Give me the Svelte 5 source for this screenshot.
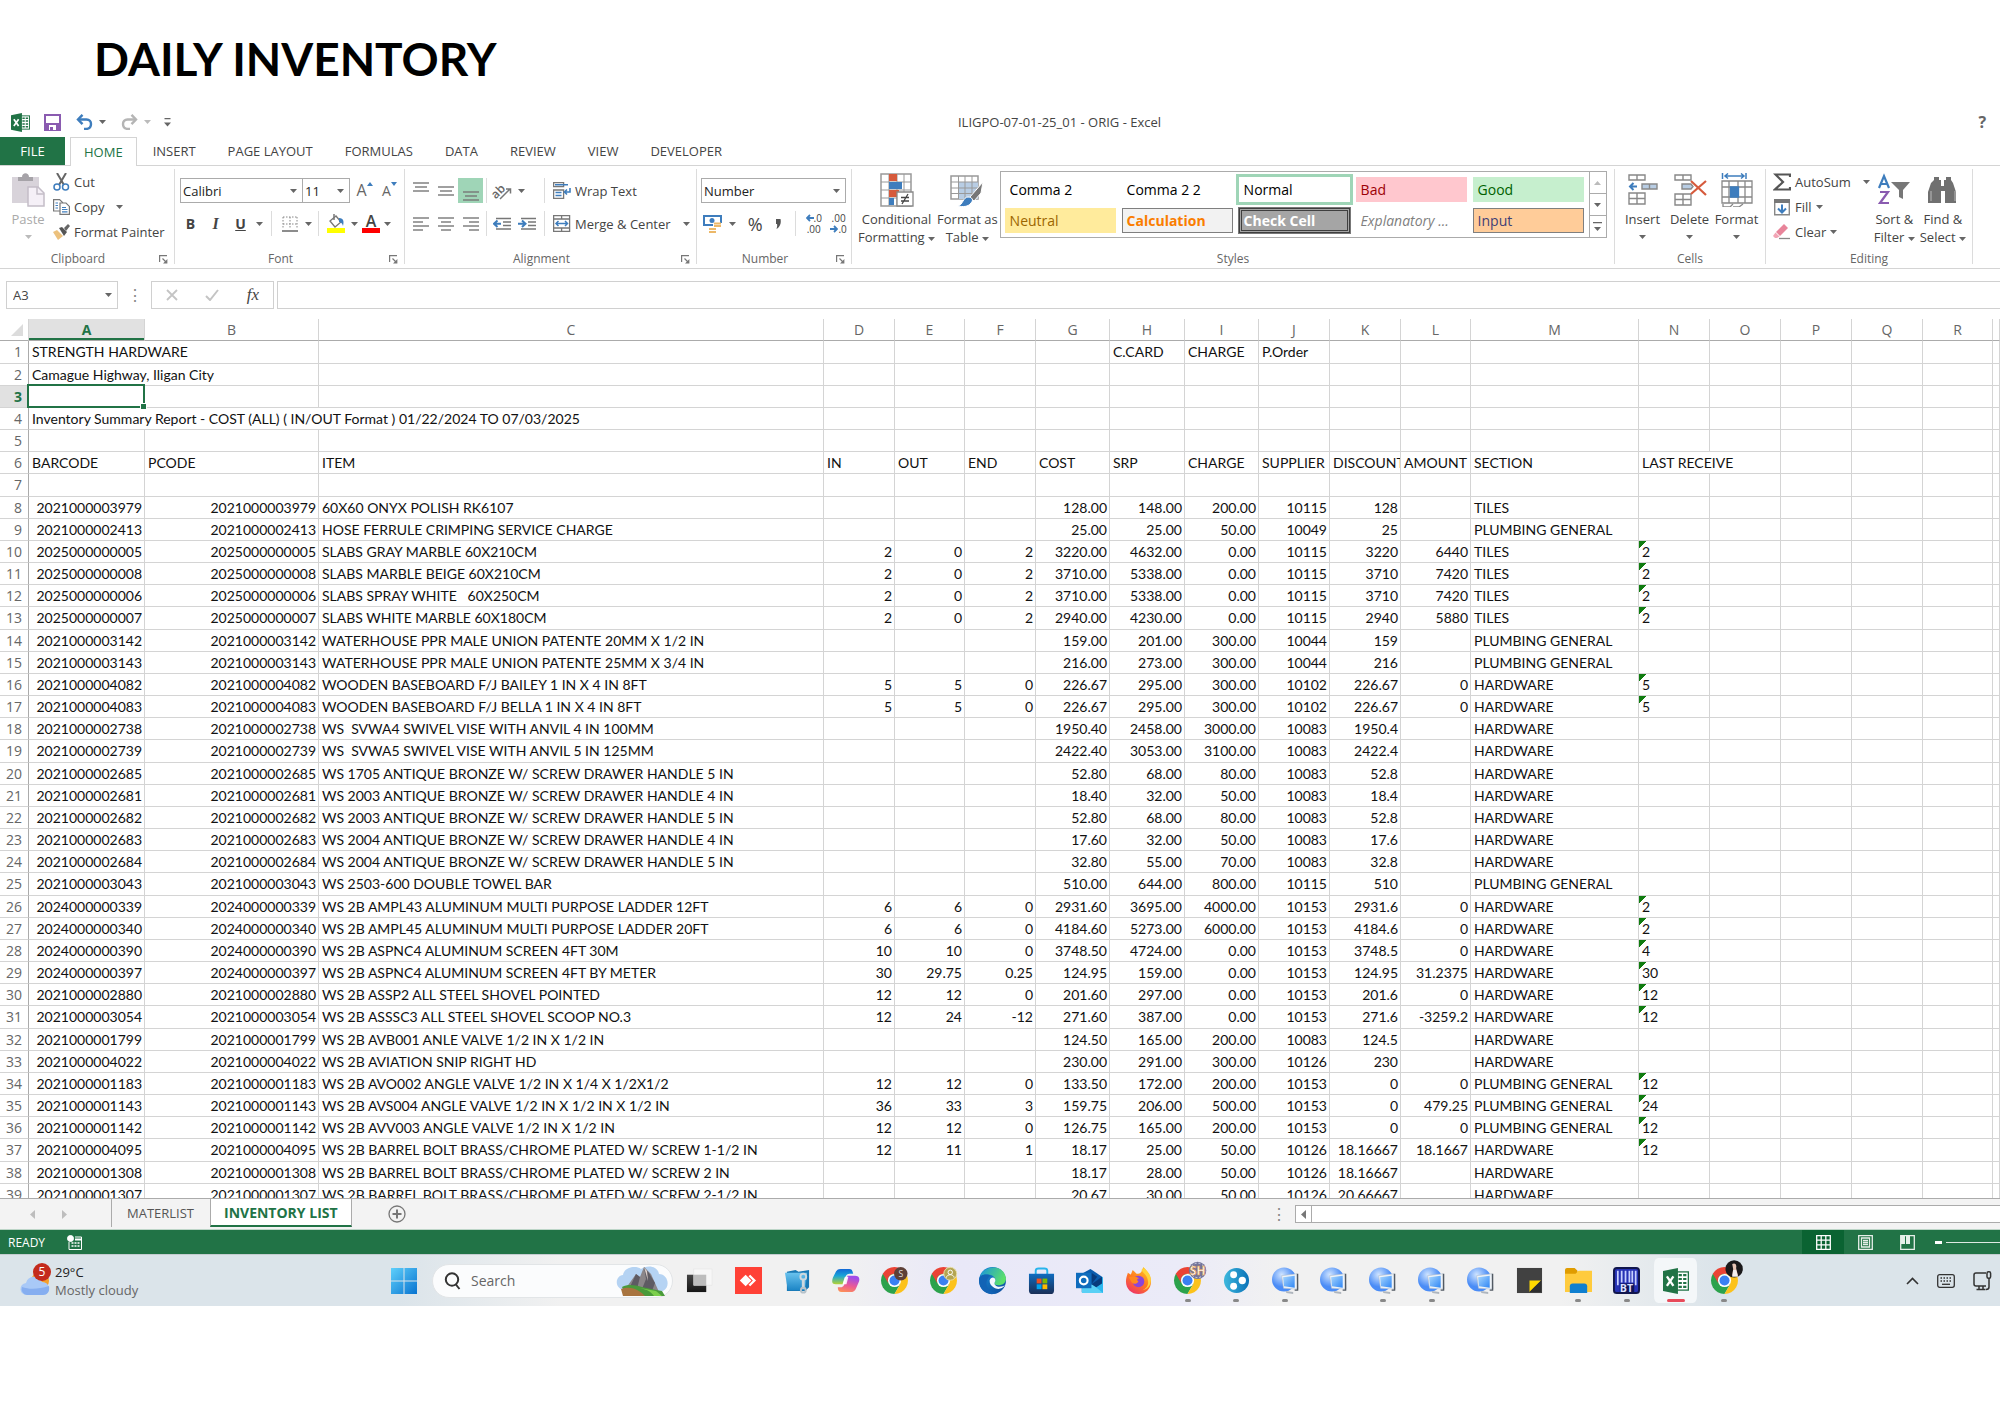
<script>
  const tabs = ['INSERT', 'PAGE LAYOUT', 'FORMULAS', 'DATA', 'REVIEW', 'VIEW', 'DEVELOPER'];

  const columns = [
    ['A', 116], ['B', 174], ['C', 505], ['D', 71], ['E', 70], ['F', 71],
    ['G', 74], ['H', 75], ['I', 74], ['J', 71], ['K', 71], ['L', 70],
    ['M', 168], ['N', 71], ['O', 71], ['P', 71], ['Q', 71], ['R', 70], ['', 0],
  ];

  const cellStyles = [
    ['Comma 2', ''], ['Comma 2 2', ''], ['Normal', 'normal'], ['Bad', 'bad'], ['Good', 'good'],
    ['Neutral', 'neutral'], ['Calculation', 'calculation'], ['Check Cell', 'check'],
    ['Explanatory ...', 'explanatory'], ['Input', 'input'],
  ];

  // cells in the first rows: text, and the number of columns it runs over
  const head = [
    [['STRENGTH HARDWARE', 2], '', '', '', '', '', 'C.CARD', 'CHARGE', 'P.Order', '', '', '', '', '', '', '', '', ''],
    [['Camague Highway, Iligan City', 2], ...Array(17).fill('')],
    Array(19).fill(''),
    [['Inventory Summary Report - COST (ALL) ( IN/OUT Format ) 01/22/2024 TO 07/03/2025', 3], ...Array(16).fill('')],
    Array(19).fill(''),
    ['BARCODE', 'PCODE', 'ITEM', 'IN', 'OUT', 'END', 'COST', 'SRP', 'CHARGE', 'SUPPLIER', 'DISCOUNT', 'AMOUNT', 'SECTION', ['LAST RECEIVE', 2], '', '', '', ''],
    Array(19).fill(''),
  ];

  // barcode | item | in | out | end | cost | srp | charge | supplier | discount | amount | section | last receive
  const items = `2021000003979|60X60 ONYX POLISH RK6107||||128.00|148.00|200.00|10115|128||TILES|
2021000002413|HOSE FERRULE CRIMPING SERVICE CHARGE||||25.00|25.00|50.00|10049|25||PLUMBING GENERAL|
2025000000005|SLABS GRAY MARBLE 60X210CM|2|0|2|3220.00|4632.00|0.00|10115|3220|6440|TILES|2
2025000000008|SLABS MARBLE BEIGE 60X210CM|2|0|2|3710.00|5338.00|0.00|10115|3710|7420|TILES|2
2025000000006|SLABS SPRAY WHITE   60X250CM|2|0|2|3710.00|5338.00|0.00|10115|3710|7420|TILES|2
2025000000007|SLABS WHITE MARBLE 60X180CM|2|0|2|2940.00|4230.00|0.00|10115|2940|5880|TILES|2
2021000003142|WATERHOUSE PPR MALE UNION PATENTE 20MM X 1/2 IN||||159.00|201.00|300.00|10044|159||PLUMBING GENERAL|
2021000003143|WATERHOUSE PPR MALE UNION PATENTE 25MM X 3/4 IN||||216.00|273.00|300.00|10044|216||PLUMBING GENERAL|
2021000004082|WOODEN BASEBOARD F/J BAILEY 1 IN X 4 IN 8FT|5|5|0|226.67|295.00|300.00|10102|226.67|0|HARDWARE|5
2021000004083|WOODEN BASEBOARD F/J BELLA 1 IN X 4 IN 8FT|5|5|0|226.67|295.00|300.00|10102|226.67|0|HARDWARE|5
2021000002738|WS  SVWA4 SWIVEL VISE WITH ANVIL 4 IN 100MM||||1950.40|2458.00|3000.00|10083|1950.4||HARDWARE|
2021000002739|WS  SVWA5 SWIVEL VISE WITH ANVIL 5 IN 125MM||||2422.40|3053.00|3100.00|10083|2422.4||HARDWARE|
2021000002685|WS 1705 ANTIQUE BRONZE W/ SCREW DRAWER HANDLE 5 IN||||52.80|68.00|80.00|10083|52.8||HARDWARE|
2021000002681|WS 2003 ANTIQUE BRONZE W/ SCREW DRAWER HANDLE 4 IN||||18.40|32.00|50.00|10083|18.4||HARDWARE|
2021000002682|WS 2003 ANTIQUE BRONZE W/ SCREW DRAWER HANDLE 5 IN||||52.80|68.00|80.00|10083|52.8||HARDWARE|
2021000002683|WS 2004 ANTIQUE BRONZE W/ SCREW DRAWER HANDLE 4 IN||||17.60|32.00|50.00|10083|17.6||HARDWARE|
2021000002684|WS 2004 ANTIQUE BRONZE W/ SCREW DRAWER HANDLE 5 IN||||32.80|55.00|70.00|10083|32.8||HARDWARE|
2021000003043|WS 2503-600 DOUBLE TOWEL BAR||||510.00|644.00|800.00|10115|510||PLUMBING GENERAL|
2024000000339|WS 2B AMPL43 ALUMINUM MULTI PURPOSE LADDER 12FT|6|6|0|2931.60|3695.00|4000.00|10153|2931.6|0|HARDWARE|2
2024000000340|WS 2B AMPL45 ALUMINUM MULTI PURPOSE LADDER 20FT|6|6|0|4184.60|5273.00|6000.00|10153|4184.6|0|HARDWARE|2
2024000000390|WS 2B ASPNC4 ALUMINUM SCREEN 4FT 30M|10|10|0|3748.50|4724.00|0.00|10153|3748.5|0|HARDWARE|4
2024000000397|WS 2B ASPNC4 ALUMINUM SCREEN 4FT BY METER|30|29.75|0.25|124.95|159.00|0.00|10153|124.95|31.2375|HARDWARE|30
2021000002880|WS 2B ASSP2 ALL STEEL SHOVEL POINTED|12|12|0|201.60|297.00|0.00|10153|201.6|0|HARDWARE|12
2021000003054|WS 2B ASSSC3 ALL STEEL SHOVEL SCOOP NO.3|12|24|-12|271.60|387.00|0.00|10153|271.6|-3259.2|HARDWARE|12
2021000001799|WS 2B AVB001 ANLE VALVE 1/2 IN X 1/2 IN||||124.50|165.00|200.00|10083|124.5||HARDWARE|
2021000004022|WS 2B AVIATION SNIP RIGHT HD||||230.00|291.00|300.00|10126|230||HARDWARE|
2021000001183|WS 2B AVO002 ANGLE VALVE 1/2 IN X 1/4 X 1/2X1/2|12|12|0|133.50|172.00|200.00|10153|0|0|PLUMBING GENERAL|12
2021000001143|WS 2B AVS004 ANGLE VALVE 1/2 IN X 1/2 IN X 1/2 IN|36|33|3|159.75|206.00|500.00|10153|0|479.25|PLUMBING GENERAL|24
2021000001142|WS 2B AVV003 ANGLE VALVE 1/2 IN X 1/2 IN|12|12|0|126.75|165.00|200.00|10153|0|0|PLUMBING GENERAL|12
2021000004095|WS 2B BARREL BOLT BRASS/CHROME PLATED W/ SCREW 1-1/2 IN|12|11|1|18.17|25.00|50.00|10126|18.16667|18.1667|HARDWARE|12
2021000001308|WS 2B BARREL BOLT BRASS/CHROME PLATED W/ SCREW 2 IN||||18.17|28.00|50.00|10126|18.16667||HARDWARE|
2021000001307|WS 2B BARREL BOLT BRASS/CHROME PLATED W/ SCREW 2-1/2 IN||||20.67|30.00|50.00|10126|20.66667||HARDWARE|`
    .split('\n')
    .map((line) => {
      const [code, ...rest] = line.split('|');
      return [code, code, ...rest, '', '', '', '', ''];
    });

  const isText = (i) => i === 2 || i === 12 || i === 13;

  const apps = [
    ['desktops'], ['anydesk'], ['vault'], ['copilot'], ['chrome', 's'], ['chrome', 'gold'], ['edge'],
    ['store'], ['outlook'], ['firefox'], ['chrome', 'sh', 1], ['dots', '', 1], ['remote', '', 1],
    ['remote'], ['remote', '', 1], ['remote', '', 1], ['remote'], ['notes'], ['folder', '', 1],
    ['bartender', '', 1], ['excel', '', 2], ['chrome', 'photo', 1],
  ];

  let search = '';
  let formula = '';
</script>

{#snippet caret(light = false)}
  <svg class="caret" class:light width="7" height="4" viewBox="0 0 7 4"><path d="M0 0h7L3.5 4z" /></svg>
{/snippet}

{#snippet launcher(name)}
  <button class="launcher" aria-label="{name} settings">
    <svg width="9" height="9" viewBox="0 0 9 9" fill="none" stroke="#777" stroke-width="1.2"><path d="M.6 7V.6H8M3.5 3.5 7 7" /><path d="M8.4 4v4.4H4z" fill="#777" stroke="none" /></svg>
  </button>
{/snippet}

{#snippet lines(list, y)}
  <svg width="18" height="24" viewBox="0 0 18 24" stroke="#777" stroke-width="1.4">
    {#each list as [a, b], i}
      <path d="M{a} {y + i * 4}H{b}" />
    {/each}
  </svg>
{/snippet}

{#snippet indent(right)}
  <svg width="19" height="16" viewBox="0 0 19 16" fill="none" stroke="#777" stroke-width="1.4">
    <path d="M3 2.500h15M10 6h8M10 9.500h8M3 13h15" />
    {#if right}
      <path d="M0 7.700h6M4 4.500l3.500 3.200L4 11" stroke="#3e7dbd" stroke-width="2" />
    {:else}
      <path d="M2 7.700h6M4.500 4.500 1 7.700 4.500 11" stroke="#3e7dbd" stroke-width="2" />
    {/if}
  </svg>
{/snippet}

{#snippet excelLogo(size)}
  <svg width={size} height={size} viewBox="0 0 20 20">
    <rect x="9" y="3" width="10.500" height="14" fill="#fff" stroke="#217346" />
    <path d="M12 5.500h2.500M15.500 5.500H18M12 8.500h2.500M15.500 8.500H18M12 11.500h2.500M15.500 11.500H18M12 14.500h2.500M15.500 14.500H18" stroke="#217346" stroke-width="1.600" />
    <path d="M0 2.300 11.500 0v20L0 17.700z" fill="#217346" />
    <path d="m3 6.500 5 7.200M8 6.500l-5 7.200" stroke="#fff" stroke-width="1.800" />
  </svg>
{/snippet}

{#snippet appIcon(kind, badge)}
  {#if kind === 'excel'}
    {@render excelLogo(26)}
  {:else}
    <svg width="27" height="27" viewBox="0 0 28 28" overflow="visible">
      {#if kind === 'desktops'}
        <path d="M1 8h20v18H1z" fill="url(#dark)" />
        <path d="M8 2h19v17H8z" fill="#f7f7f7" stroke="#e4e4e4" stroke-width=".6" />
        <path d="M8 8h13v11H8z" fill="#bdbdbd" />
      {:else if kind === 'anydesk'}
        <path d="M0 0h28v28H0z" fill="#ff4136" />
        <path d="m5 14 6-6 6 6-6 6z" fill="#fff" />
        <path d="m14 9.500 1.800-1.500 6 6-6 6-1.800-1.500 4.500-4.500z" fill="#fff" />
      {:else if kind === 'vault'}
        <path d="M3 5 12 3l3 2 11-2v18l-4 4H3z" fill="#1978b4" />
        <path d="M1 6h23l-2 18H4z" fill="url(#sky)" />
        <circle cx="20" cy="10" r="3" fill="none" stroke="#cdd8de" stroke-width="2" />
        <path d="M20 13v10" stroke="#cdd8de" stroke-width="3" />
        <circle cx="20" cy="24" r="2.500" fill="none" stroke="#b7c2c9" stroke-width="2" />
      {:else if kind === 'copilot'}
        <path d="M9 2h9c3 0 3 2 4 5h-4c-3 0-4 3-5 6l-2 5H4c-5 0-4-4-3-7l3-6c1-2 2-3 5-3z" fill="url(#cop1)" />
        <path d="M19 26h-9c-3 0-4-2-4-5h3c3 0 4-3 5-6l2-6h8c4 0 5 3 4 6l-3 7c-1 3-3 4-6 4z" fill="url(#cop2)" />
        <path d="m13 11-2 7h4l2-8h-3z" fill="#fff" opacity=".9" />
      {:else if kind === 'chrome'}
        <path d="M1.900 7A14 14 0 0 0 14 28l6-10.500L14 14z" fill="#2ba24c" />
        <path d="M14 28A14 14 0 0 0 26.100 7H14l6 10.500z" fill="#fcc21b" />
        <path d="M1.900 7 8 17.500 14 14V7z" fill="#2ba24c" />
        <path d="M1.900 7A14 14 0 0 1 26.100 7H14a7 7 0 0 0-6 10.500z" fill="#ea4335" />
        <circle cx="14" cy="14" r="6.800" fill="#fff" />
        <circle cx="14" cy="14" r="5.200" fill="#3a80f2" />
        {#if badge === 's'}
          <circle cx="20.500" cy="7" r="7" fill="#5d4037" />
          <text x="20.500" y="10" text-anchor="middle" font-size="9" fill="#ddd">S</text>
        {:else if badge === 'gold'}
          <circle cx="21" cy="7" r="6.700" fill="#b4a552" stroke="#e8dfa8" />
          <circle cx="21" cy="5.500" r="2.300" fill="none" stroke="#fff" />
          <path d="M17 11c.5-4 7.500-4 8 0" fill="none" stroke="#fff" />
        {:else if badge === 'sh'}
          <circle cx="24.500" cy="3.500" r="9" fill="#73759b" />
          <circle cx="24.500" cy="3.500" r="7.500" fill="none" stroke="#dadbea" stroke-dasharray="2 2" />
          <text x="24.500" y="8" text-anchor="middle" font-size="12" font-weight="700" fill="#fff" stroke="#e09030" stroke-width=".6">SH</text>
        {:else}
          <circle cx="24" cy="2" r="9" fill="#1b191a" />
          <path d="M22-3c3-2 5 1 4 4l2 8h-6l1-7z" fill="#e9c6b5" />
          <path d="M23 3h3l2 7h-6z" fill="#f2efee" />
        {/if}
      {:else if kind === 'edge'}
        <circle cx="14" cy="14" r="14" fill="url(#edge1)" />
        <path d="M0 14C0 8 7 6 12 9c-3 2-5 6-4 10 1 5 6 8 11 8C9 31 0 24 0 14z" fill="#1263b5" />
        <path d="M2 7C8-2 26-3 28 12c0 5-4 7-8 7-3 0-5-1-4-3 2-2 1-7-5-8-4-1-7 0-9 1z" fill="url(#edge2)" />
        <path d="M11 14c1-4 6-4 6 0 0 1-2 3 0 5 3 3 8 1 10 0-3 4-8 5-12 2-3-2-4-4-4-7z" fill="#f4f6ff" />
      {:else if kind === 'store'}
        <path d="M8 8V4c0-2 1-2.500 3-2.500h6c2 0 3 .5 3 2.500v4" fill="none" stroke="#28b4ec" stroke-width="2" />
        <path d="M1 7h26v17c0 3-1 4-4 4H5c-3 0-4-1-4-4z" fill="url(#store)" />
        <path d="M9 12h5v5H9z" fill="#f25022" /><path d="M15 12h5v5h-5z" fill="#7fba00" />
        <path d="M9 18h5v5H9z" fill="#00a4ef" /><path d="M15 18h5v5h-5z" fill="#ffb900" />
      {:else if kind === 'outlook'}
        <path d="m6 7 9-5 12 8v16H6z" fill="#0a5cad" />
        <path d="M17 18 28 10v17H8z" fill="#2bb7ee" /><path d="m17 18 11 9H6v-5z" fill="#59d0f5" />
        <path d="m16 6 6 4-6 8 11-8v7l-6 4-5-3z" fill="#083b7c" />
        <path d="M0 6h16v16H0z" fill="#0f6cbd" />
        <circle cx="8" cy="14" r="4" fill="none" stroke="#fff" stroke-width="2.200" />
      {:else if kind === 'firefox'}
        <path d="M3 6c1 1 2 1 3 2l2-5 4 4c2 0 4 0 5-2l2-5c3 3 8 8 8 15 0 8-6 13-13 13S1 23 1 15c0-3 1-6 2-9z" fill="url(#fire)" />
        <path d="M17 3c2 4 7 6 7 13 0 4-3 7-6 8 8-1 11-10 7-17l-5-6z" fill="#ffd43b" />
        <circle cx="14" cy="15" r="6" fill="#8b45d8" />
        <path d="M4 11c3-2 8-1 11 1-3 0-3 2-1 3-2 3-5 3-7 1z" fill="#ff8a1e" />
      {:else if kind === 'dots'}
        <circle cx="14" cy="14" r="13" fill="url(#dots)" />
        <circle cx="11" cy="8" r="3.600" fill="#fff" /><circle cx="20" cy="14" r="3.800" fill="#fff" /><circle cx="11" cy="20" r="3.600" fill="#fff" />
      {:else if kind === 'remote'}
        <circle cx="12.500" cy="13" r="12.500" fill="url(#globe)" />
        <path d="m10 9 16-2 1 16-15-1z" fill="#eef3f8" stroke="#b3bfcc" stroke-width=".6" />
        <path d="m11.500 10.500 12-1.500v12.500L12.500 20z" fill="url(#sky2)" />
        <path d="M26.500 7v17h-3" fill="none" stroke="#525a63" stroke-width="1.500" />
        <path d="m14 25 8 1v2l-7-1z" fill="#aeb5bd" />
      {:else if kind === 'notes'}
        <path d="M1 1h26v26H1z" fill="#414141" />
        <path d="M14 14h12L14 26z" fill="#ffd900" /><path d="M26 14v12H14z" fill="#2e2e2e" />
      {:else if kind === 'folder'}
        <path d="M0 3c0-1 1-2 2-2h8l3 3v5H0z" fill="#e09c00" />
        <path d="M0 7h11l3-3h14v22H0z" fill="#ffcb3d" />
        <path d="M5 20c0-2 1-3 3-3h12c2 0 3 1 3 3v7H5z" fill="#0f7fd0" />
      {:else if kind === 'bartender'}
        <rect x="1" y="1" width="26" height="26" rx="3" fill="#2632b5" stroke="#11164d" stroke-width="2" />
        <path d="M5 4v15M9 4v12M13 4v12M17 4v12M20 4v12M23.500 4v15" stroke="#c8d1ff" stroke-width="1.800" />
        <path d="M7 17h15v9H7z" fill="#0e145a" />
        <text x="14" y="25.500" text-anchor="middle" font-size="11" font-weight="700" fill="#dbe0ff">BT</text>
      {/if}
    </svg>
  {/if}
{/snippet}

<svg class="defs" width="0" height="0" aria-hidden="true">
  <defs>
    <linearGradient id="dark" x2="0" y2="1"><stop stop-color="#444" /><stop offset="1" stop-color="#161616" /></linearGradient>
    <linearGradient id="sky" x2="0" y2="1"><stop stop-color="#69c2ee" /><stop offset="1" stop-color="#1d86c6" /></linearGradient>
    <linearGradient id="sky2" x2="1" y2="1"><stop stop-color="#a9d8ff" /><stop offset="1" stop-color="#2f86f5" /></linearGradient>
    <linearGradient id="cop1" x2="0" y2="1"><stop stop-color="#1267d6" /><stop offset=".45" stop-color="#18a5d8" /><stop offset="1" stop-color="#b9d430" /></linearGradient>
    <linearGradient id="cop2" x1=".3" x2="0" y2="1"><stop stop-color="#a04be8" /><stop offset=".5" stop-color="#ec5a94" /><stop offset="1" stop-color="#ff9a4d" /></linearGradient>
    <linearGradient id="edge1" x2="1" y2="1"><stop stop-color="#1a8fd8" /><stop offset="1" stop-color="#0c4a9c" /></linearGradient>
    <linearGradient id="edge2" x2="1" y2=".4"><stop stop-color="#1b95dc" /><stop offset="1" stop-color="#5be06a" /></linearGradient>
    <linearGradient id="store" x2="0" y2="1"><stop stop-color="#0f6cc0" /><stop offset="1" stop-color="#1a2f57" /></linearGradient>
    <linearGradient id="fire" x1=".8" x2=".2" y2="1"><stop stop-color="#ffc928" /><stop offset=".5" stop-color="#ff7a1f" /><stop offset="1" stop-color="#ee2f6b" /></linearGradient>
    <linearGradient id="dots" x2="1" y2="0"><stop stop-color="#3db8dd" /><stop offset="1" stop-color="#0a72b8" /></linearGradient>
    <radialGradient id="globe" cx=".4" cy=".3"><stop stop-color="#cfe4ff" /><stop offset="1" stop-color="#4a8cf6" /></radialGradient>
    <linearGradient id="win" x2="1" y2="1"><stop stop-color="#5fd0fb" /><stop offset="1" stop-color="#0873d0" /></linearGradient>
  </defs>
</svg>

<main>
  <h1>DAILY INVENTORY</h1>

  <header class="titlebar">
    <div class="quick">
      {@render excelLogo(19)}
      <button aria-label="Save" class="save">
        <svg width="17" height="17" viewBox="0 0 17 17"><path d="M1 1h15v15H1z" fill="none" stroke="#8a5bb0" stroke-width="2" /><path d="M1 9h15v7H1z" fill="#8a5bb0" /><path d="M5 11h7v5H5z" fill="#fff" /><path d="M6 13h3v3H6z" fill="#8a5bb0" /></svg>
      </button>
      <button aria-label="Undo" class="undo">
        <svg width="17" height="16" viewBox="0 0 17 16" fill="none" stroke="#3e7dbd" stroke-width="2.400"><path d="M2 5.500h8.500c6 0 6 8.500 0 9.500H8" /><path d="M6.500.8 2 5.500l4.500 4.700" /></svg>
        {@render caret()}
      </button>
      <button aria-label="Redo" class="redo">
        <svg width="17" height="16" viewBox="0 0 17 16" fill="none" stroke="#b5b5b5" stroke-width="2.400"><path d="M15 5.500H6.500c-6 0-6 8.500 0 9.500H9" /><path d="M10.500.8 15 5.500l-4.500 4.700" /></svg>
        {@render caret(true)}
      </button>
      <button aria-label="Customize toolbar">
        <svg width="7" height="9" viewBox="0 0 7 9"><path d="M.5 0h6v1.200h-6zM0 4.500h7L3.500 8.500z" fill="#666" /></svg>
      </button>
    </div>
    <span class="doc">ILIGPO-07-01-25_01 - ORIG - Excel</span>
    <button class="help" aria-label="Help">?</button>
  </header>

  <nav class="tabs">
    <button class="file">FILE</button>
    <button class="home">HOME</button>
    {#each tabs as tab}
      <button>{tab}</button>
    {/each}
  </nav>

  <section class="ribbon">
    <div class="group clipboard">
      <div class="body">
        <button class="big faded">
          <svg width="34" height="34" viewBox="0 0 34 34"><path d="M1 4h27v26H1z" fill="#d8d3da" /><path d="M7 8V4h4c0-5 7-5 7 0h4v4z" fill="#a6a3a8" /><path d="M17 14h10l6 6v13H17z" fill="#f5f0f7" stroke="#c4bdc8" stroke-width="1.500" /><path d="M26 14v7h7" fill="none" stroke="#c4bdc8" stroke-width="1.500" /></svg>
          <span>Paste</span>
          {@render caret(true)}
        </button>
        <div class="three">
          <button>
            <svg width="17" height="18" viewBox="0 0 17 18" fill="none"><path d="m4 0 7 12M13 0 6 12" stroke="#666" stroke-width="2" /><circle cx="4" cy="14" r="3" stroke="#3e7dbd" stroke-width="1.500" /><circle cx="12.500" cy="14" r="3" stroke="#3e7dbd" stroke-width="1.500" /></svg>
            Cut
          </button>
          <button>
            <svg width="17" height="16" viewBox="0 0 17 16" fill="#fff" stroke="#777" stroke-width="1.200"><path d="M.6.6h6l3 3V12h-9z" /><path d="M7 4h6l3.400 3.400V15.400H7z" /><path d="M2.500 4H5M2.500 6.500H5M2.500 9H5M9 8.500h4M9 10.500h5.500M9 12.800h5.500" stroke="#3e7dbd" /></svg>
            Copy <i class="gap"></i>{@render caret()}
          </button>
          <button>
            <svg width="17" height="16" viewBox="0 0 17 16"><path d="m0 8 4-2 6 6-5 4z" fill="#ecc17d" /><path d="m6 4 3-1 5 5-3 4z" fill="#555" /><path d="m11 4 4-4 2 2-4 5z" fill="#666" /></svg>
            Format Painter
          </button>
        </div>
      </div>
      <footer>Clipboard{@render launcher('Clipboard')}</footer>
    </div>

    <div class="group font">
      <div class="body two">
        <div class="row">
          <span class="combo name"><select aria-label="Font"><option>Calibri</option></select>{@render caret()}</span>
          <span class="combo size"><select aria-label="Font size"><option>11</option></select>{@render caret()}</span>
          <button class="tool grow" aria-label="Increase font size"><span>A</span><svg width="6" height="4" viewBox="0 0 6 4"><path d="m0 4 3-4 3 4z" fill="#3e7dbd" /></svg></button>
          <button class="tool shrink" aria-label="Decrease font size"><span>A</span><svg width="6" height="4" viewBox="0 0 6 4"><path d="M0 0h6L3 4z" fill="#3e7dbd" /></svg></button>
        </div>
        <div class="row">
          <button class="tool bold">B</button>
          <button class="tool italic">I</button>
          <button class="tool under">U</button>
          <span class="drop">{@render caret()}</span>
          <i class="sep"></i>
          <button class="tool" aria-label="Borders"><svg width="16" height="16" viewBox="0 0 16 16" fill="none" stroke="#888"><path d="M1 1h14M1 8h14M1 1v12M8 1v12M15 1v12" stroke-dasharray="1.500 1.500" /><path d="M0 15h16" stroke="#666" stroke-width="1.500" /></svg></button>
          <span class="drop">{@render caret()}</span>
          <i class="sep last"></i>
          <button class="tool" aria-label="Fill colour"><svg width="18" height="19" viewBox="0 0 18 19"><path d="m3 7 6-5 5 6-6 5z" fill="#fff" stroke="#777" stroke-width="1.300" /><path d="M7 0v6" stroke="#777" stroke-width="1.500" /><path d="M12 4c5 0 5 4 4 8-1-3-2-4-4-4z" fill="#3e7dbd" /><path d="M0 14h18v5H0z" fill="#ff0" /></svg></button>
          <span class="drop">{@render caret()}</span>
          <button class="tool fontcolor" aria-label="Font colour">A</button>
          <span class="drop">{@render caret()}</span>
        </div>
      </div>
      <footer>Font{@render launcher('Font')}</footer>
    </div>

    <div class="group alignment">
      <div class="body two">
        <div class="row">
          <button class="tool" aria-label="Top align">{@render lines([[1, 17], [3, 15], [1, 17]], 4)}</button>
          <button class="tool" aria-label="Middle align">{@render lines([[1, 17], [3, 15], [1, 17]], 8)}</button>
          <button class="tool on" aria-label="Bottom align">{@render lines([[1, 17], [3, 15], [1, 17]], 13)}</button>
          <i class="sep"></i>
          <button class="tool" aria-label="Orientation"><svg width="18" height="18" viewBox="0 0 18 18" overflow="visible"><text x="-3" y="12" transform="rotate(-45 6 9)" font-size="12" font-weight="600" fill="#666">ab</text><path d="m6 17 10-10M12 7h4.500v4.500" fill="none" stroke="#777" stroke-width="1.500" /></svg></button>
          <span class="drop">{@render caret()}</span>
          <i class="sep far"></i>
          <button class="wide">
            <svg width="18" height="17" viewBox="0 0 18 17" fill="none" stroke="#777" stroke-width="1.300"><path d="M.6.600h10v4h-10zM.6 8h10v8.400h-10z" /><path d="M2 2.700h13M2.500 10.500h6M2.500 13.500h6" stroke="#3e7dbd" stroke-width="1.500" /><path d="M17 6v4h-5M14 7.500 11.500 10l2.500 2.500" stroke="#3e7dbd" stroke-width="1.600" /></svg>
            Wrap Text
          </button>
        </div>
        <div class="row">
          <button class="tool" aria-label="Align left">{@render lines([[1, 17], [1, 11], [1, 17], [1, 11]], 6)}</button>
          <button class="tool" aria-label="Center">{@render lines([[1, 17], [4, 14], [1, 17], [4, 14]], 6)}</button>
          <button class="tool" aria-label="Align right">{@render lines([[1, 17], [7, 17], [1, 17], [7, 17]], 6)}</button>
          <i class="sep"></i>
          <button class="tool" aria-label="Decrease indent">{@render indent(false)}</button>
          <button class="tool" aria-label="Increase indent">{@render indent(true)}</button>
          <i class="sep near"></i>
          <button class="wide">
            <svg width="18" height="17" viewBox="0 0 18 17" fill="none" stroke="#777" stroke-width="1.300"><path d="M.6.600h16v15.800H.6zM.6 4h16M.6 13h16M8.600.600V4M8.600 13v3.400" /><path d="M3 8.500h11.500M5.500 6 3 8.500 5.500 11M12 6l2.500 2.500L12 11" stroke="#3e7dbd" stroke-width="1.500" /></svg>
            Merge &amp; Center <i class="gap"></i>{@render caret()}
          </button>
        </div>
      </div>
      <footer>Alignment{@render launcher('Alignment')}</footer>
    </div>

    <div class="group number">
      <div class="body two">
        <div class="row">
          <span class="combo format"><select aria-label="Number format"><option>Number</option></select>{@render caret()}</span>
        </div>
        <div class="row">
          <button class="tool" aria-label="Accounting format"><svg width="20" height="18" viewBox="0 0 20 18"><path d="M1 1h17v9H1z" fill="#fff" stroke="#3e7dbd" stroke-width="2" /><circle cx="9" cy="5.500" r="2.500" fill="#3e7dbd" /><path d="M10 8h9v10H5v-4h5z" fill="#fff" /><path d="M11 8.500h7M11 11h7M6 14h7M6 17h7" stroke="#ecb868" stroke-width="2" /></svg></button>
          <span class="drop">{@render caret()}</span>
          <button class="tool pct">%</button>
          <button class="tool comma" aria-label="Comma style"><svg width="8" height="12" viewBox="0 0 8 12"><path d="M2 1h4.500c1 4-.5 8-4 10 .500-2 1-4 .500-5H2z" fill="#555" /></svg></button>
          <i class="sep"></i>
          <button class="tool dec" aria-label="Increase decimal"><span><svg width="8" height="8" viewBox="0 0 8 8" fill="none" stroke="#3e7dbd" stroke-width="1.800"><path d="M1 4h7M4 1 1 4l3 3" /></svg>.0</span><span>.00</span></button>
          <button class="tool dec" aria-label="Decrease decimal"><span>.00</span><span><svg width="8" height="8" viewBox="0 0 8 8" fill="none" stroke="#3e7dbd" stroke-width="1.800"><path d="M0 4h7M4 1l3 3-3 3" /></svg>.0</span></button>
        </div>
      </div>
      <footer>Number{@render launcher('Number')}</footer>
    </div>

    <div class="group styles">
      <div class="body">
        <button class="big cond">
          <svg width="34" height="34" viewBox="0 0 34 34" fill="none"><path d="M1 1h30v32H1z" fill="#fff" stroke="#999" stroke-width="1.500" /><path d="M1 9h30M1 17h30M1 25h30M9 1v32M17 1v32M24 1v32" stroke="#999" /><path d="M9 1h8v7H9zM9 17h10v7H9z" fill="#d65a3c" /><path d="M9 9h13v7H9zM9 25h5v7H9z" fill="#3e7dbd" /><path d="M17 19h16v14H17z" fill="#fff" stroke="#888" stroke-width="1.300" /><path d="M21 24.500h8M21 28h8M28 21l-6 10" stroke="#444" stroke-width="1.300" /></svg>
          <span>Conditional<br />Formatting {@render caret()}</span>
        </button>
        <button class="big fmt">
          <svg width="34" height="34" viewBox="0 0 34 34"><path d="M1 3h27v23H1z" fill="#fff" stroke="#999" stroke-width="1.500" /><path d="M9 9h19v17H9z" fill="#b8cde4" /><path d="M1 9h27M1 15h27M1 20.500h27M8.500 3v23M15 3v23M22 3v23" stroke="#999" fill="none" /><path d="m33 9-2 11-7 8-4-4z" fill="#777" stroke="#fff" /><path d="M8 33c5-1 5-9 10-9 4 0 6 3 3 6-3 4-8 4-13 3z" fill="#3e7dbd" stroke="#fff" /></svg>
          <span>Format as<br />Table {@render caret()}</span>
        </button>
        <div class="gallery">
          <div class="swatches">
            {#each cellStyles as [label, kind]}
              <button class="swatch {kind}">{label}</button>
            {/each}
          </div>
          <div class="scroller">
            <button aria-label="Scroll up"><svg width="7" height="4" viewBox="0 0 7 4"><path d="M0 4h7L3.500 0z" fill="#bbb" /></svg></button>
            <button aria-label="Scroll down">{@render caret()}</button>
            <button aria-label="More styles"><svg width="9" height="10" viewBox="0 0 9 10"><path d="M0 0h9v1.300H0zM1 5h7L4.500 9z" fill="#666" /></svg></button>
          </div>
        </div>
      </div>
      <footer>Styles</footer>
    </div>

    <div class="group cells">
      <div class="body">
        <button class="big">
          <svg width="32" height="34" viewBox="0 0 32 34" fill="#fff" stroke="#888" stroke-width="1.400"><path d="M2 2h16v5H2zM10 2v5M2 20h16v11H2zM10 20v11M2 25.500h16" /><path d="M15 11h15v5H15zM22.500 11v5" fill="#b8cde4" /><path d="M10 13.500H3M6.500 10 3 13.500 6.500 17" fill="none" stroke="#3e7dbd" stroke-width="2" /></svg>
          <span>Insert</span>{@render caret()}
        </button>
        <button class="big">
          <svg width="34" height="34" viewBox="0 0 34 34" fill="#fff" stroke="#888" stroke-width="1.400"><path d="M2 2h16v5H2zM10 2v5M2 21h16v11H2zM10 21v11M2 26.500h16" /><path d="M9 11h9l2 2.500-2 2.500H9z" fill="#b8cde4" /><path d="m18 8 15 14M33 8 18 21" fill="none" stroke="#d65a3c" stroke-width="2.200" /></svg>
          <span>Delete</span>{@render caret()}
        </button>
        <button class="big">
          <svg width="32" height="34" viewBox="0 0 32 34" fill="#fff" stroke="#888" stroke-width="1.300"><path d="M1 8h30v22H1zM1 14h30M1 24h30M8 8v22M17 8v22M24 8v22" /><path d="M9.500 14h8v10h-8z" fill="#3e7dbd" stroke="#3e7dbd" /><path d="M2 31v3h7l3-3M12 34h6l4-3" fill="none" /><path d="M1.500 0v6M25 0v6M4 3h19M7 .500 4 3l3 2.500M20 .500 23 3l-3 2.500" fill="none" stroke="#3e7dbd" stroke-width="1.500" /></svg>
          <span>Format</span>{@render caret()}
        </button>
      </div>
      <footer>Cells</footer>
    </div>

    <div class="group editing">
      <div class="body">
        <div class="three">
          <button>
            <svg width="18" height="18" viewBox="0 0 18 18" fill="none" stroke="#555" stroke-width="2.200"><path d="M17 4V1.500H2.500L10 9l-8 7.500H17V14" /></svg>
            AutoSum <i class="gap"></i>{@render caret()}
          </button>
          <button>
            <svg width="18" height="18" viewBox="0 0 18 18" fill="none"><path d="M1.700 1.700h14.600v15H1.700z" stroke="#888" stroke-width="1.400" /><path d="M1 1h16v4H1z" fill="#777" /><path d="M9 6.500V14M5 10.500l4 4 4-4" stroke="#3e7dbd" stroke-width="2" /></svg>
            Fill {@render caret()}
          </button>
          <button>
            <svg width="18" height="16" viewBox="0 0 18 16"><path d="m3 8 8-8 4 4-8 8z" fill="#e8849a" /><path d="m2.500 8.500 4 4L4 14H2l-2-2z" fill="#f2a5b5" /><path d="M6 14.500h11" stroke="#888" stroke-width="1.300" /></svg>
            Clear {@render caret()}
          </button>
        </div>
        <button class="big sort">
          <svg width="34" height="34" viewBox="0 0 34 34" fill="none"><path d="m2 15 5-12 5 12M4 11h6.500" stroke="#3e7dbd" stroke-width="2.200" /><path d="M3 19h8L3 30h9" stroke="#8a5bb0" stroke-width="2.200" /><path d="M14 9h19l-7 8v9l-4-2v-7z" fill="#777" /></svg>
          <span>Sort &amp;<br />Filter {@render caret()}</span>
        </button>
        <button class="big find">
          <svg width="32" height="34" viewBox="0 0 32 34" fill="#707070"><path d="M7 4h5v3h2v6h3V7h2V4h5v3l2 3 3 9v11H18V18h-4v12H1V19l3-9 3-3z" /><path d="M4 18v10M28 18v10" stroke="#bbb" /></svg>
          <span>Find &amp;<br />Select {@render caret()}</span>
        </button>
      </div>
      <footer>Editing</footer>
    </div>
  </section>

  <div class="formulabar">
    <span class="combo cellname"><select aria-label="Name box"><option>A3</option></select>{@render caret()}</span>
    <span class="grip">⋮</span>
    <div class="fx">
      <button aria-label="Cancel"><svg width="12" height="12" viewBox="0 0 12 12" stroke="#c4c4c4" stroke-width="1.800"><path d="m1 1 10 10M11 1 1 11" /></svg></button>
      <button aria-label="Enter"><svg width="14" height="12" viewBox="0 0 14 12" fill="none" stroke="#c4c4c4" stroke-width="2"><path d="m1 7 4 4 8-10" /></svg></button>
      <button class="fn">fx</button>
    </div>
    <input aria-label="Formula" bind:value={formula} />
  </div>

  <div class="sheet">
    <table>
      <colgroup>
        <col class="rowhead" />
        {#each columns as [name, width]}
          <col style={width ? `width: ${width}px` : ''} />
        {/each}
      </colgroup>
      <thead>
        <tr>
          <th class="corner" aria-label="Select all"><svg width="12" height="12" viewBox="0 0 12 12"><path d="M12 0v12H0z" fill="#dcdcdc" /></svg></th>
          {#each columns as [name]}
            <th class:active={name === 'A'}>{name}</th>
          {/each}
        </tr>
      </thead>
      <tbody>
        {#each head as row, r}
          <tr>
            <th class:active={r === 2}>{r + 1}</th>
            {#each row as cell, c}
              {#if Array.isArray(cell)}
                <td colspan={cell[1]}>{cell[0]}</td>
              {:else}
                <td class:selected={r === 2 && c === 0}>{cell}</td>
              {/if}
            {/each}
          </tr>
        {/each}
        {#each items as row, r}
          <tr>
            <th>{r + 8}</th>
            {#each row as cell, c}
              <td class:num={!isText(c)} class:flag={c === 13 && cell}>{cell}</td>
            {/each}
          </tr>
        {/each}
      </tbody>
    </table>
  </div>

  <div class="sheettabs">
    <button class="arrow" aria-label="Previous sheet"><svg width="5" height="9" viewBox="0 0 5 9"><path d="M5 0v9L0 4.500z" fill="#bdbdbd" /></svg></button>
    <button class="arrow" aria-label="Next sheet"><svg width="5" height="9" viewBox="0 0 5 9"><path d="M0 0v9l5-4.500z" fill="#bdbdbd" /></svg></button>
    <button class="tab">MATERLIST</button>
    <button class="tab current">INVENTORY LIST</button>
    <button class="add" aria-label="New sheet"><svg width="18" height="18" viewBox="0 0 18 18" fill="none" stroke="#777"><circle cx="9" cy="9" r="8" stroke-width="1.300" /><path d="M9 4.500v9M4.500 9h9" stroke-width="2" /></svg></button>
    <span class="grip">⋮</span>
    <div class="hscroll"><button aria-label="Scroll left"><svg width="5" height="9" viewBox="0 0 5 9"><path d="M5 0v9L0 4.500z" fill="#777" /></svg></button></div>
  </div>

  <div class="status">
    <span>READY</span>
    <svg width="15" height="15" viewBox="0 0 15 15" fill="none" stroke="#fff"><path d="M2 7v7.500h12.500V2H8" /><path d="M8 4.500h6" stroke-width="2" /><path d="M4.500 8h8M4.500 11h8" stroke-width="1.600" stroke-dasharray="2 1" /><circle cx="3.500" cy="3.500" r="3" fill="#fff" /></svg>
    <div class="views">
      <button class="shown" aria-label="Normal view"><svg width="15" height="15" viewBox="0 0 15 15" fill="none" stroke="#fff" stroke-width="1.300"><path d="M.7.700h13.600v13.600H.7zM5.200.700v13.600M9.800.700v13.600M.7 5.200h13.600M.7 9.800h13.600" /></svg></button>
      <button aria-label="Page layout view"><svg width="15" height="15" viewBox="0 0 15 15" fill="none" stroke="#e6efe9" stroke-width="1.300"><path d="M.7.700h13.600v13.600H.7zM3.500 3h8v9h-8zM5 5.500h5M5 7.500h5M5 9.500h5" /></svg></button>
      <button aria-label="Page break view"><svg width="15" height="15" viewBox="0 0 15 15"><path d="M.7.700h13.600v13.600H.7z" fill="none" stroke="#e6efe9" stroke-width="1.300" /><path d="M1 1h4v8H1zM6 1h4v8H6z" fill="#e6efe9" /></svg></button>
    </div>
    <i class="minus"></i><i class="track"></i>
  </div>

  <div class="taskbar">
    <div class="weather">
      <svg width="30" height="36" viewBox="0 0 30 36" overflow="visible">
        <circle cx="19" cy="18" r="9" fill="#f5a02c" />
        <path d="M6 32a6 6 0 0 1-1-12 8.500 8.500 0 0 1 16-1 6.500 6.500 0 0 1 1 13z" fill="#a9c9f7" /><path d="M6 32a6 6 0 0 1-5-8c8 3 17 2 27-1 1 6-2 9-6 9z" fill="#86aef0" />
        <circle cx="21" cy="9" r="9" fill="#c42b1c" />
        <text x="21" y="13" text-anchor="middle" font-size="12" fill="#fff">5</text>
      </svg>
      <div><strong>29°C</strong><span>Mostly cloudy</span></div>
    </div>
    <button class="start" aria-label="Start"><svg width="26" height="26" viewBox="0 0 26 26" fill="url(#win)"><path d="M0 0h12.500v12.500H0zM13.500 0H26v12.500H13.500zM0 13.500h12.500V26H0zM13.500 13.500H26V26H13.500z" /></svg></button>
    <label class="search">
      <svg width="17" height="18" viewBox="0 0 17 18" fill="none" stroke="#333" stroke-width="2"><circle cx="8" cy="7.500" r="6.200" /><path d="m11.500 12 4 5" /></svg>
      <input placeholder="Search" bind:value={search} />
      <svg width="52" height="30" viewBox="0 0 52 30"><path d="M8 24C-2 22-1 10 7 9 8 1 20-1 25 3 33-2 42 1 43 8c9 0 12 13 4 17z" fill="#b5d3f3" /><path d="m10 22 10-14 4 3 4-10 7 7 8 18z" fill="#8b8689" /><path d="m20 8 4 3-3 12h-8zM28 1l2 12-4 10 10 2 3-8-6-10z" fill="#5e5b63" /><path d="m28 1 3 4 1 10z" fill="#dccfc9" /><path d="M6 21c10-5 18 1 40 4l3 5H10z" fill="#4a9a3b" /><path d="M5 23c12-4 20 3 24 7H7z" fill="#a8743f" /><path d="M24 22c8 2 10 3 14 8h8l-6-5z" fill="#7ccf4c" /></svg>
    </label>
    <nav class="apps">
      {#each apps as [kind, badge, state]}
        <button class:focused={state === 2} class:running={state === 1} aria-label={kind}>
          {@render appIcon(kind, badge)}
        </button>
      {/each}
    </nav>
    <div class="tray">
      <svg width="13" height="8" viewBox="0 0 13 8" fill="none" stroke="#333" stroke-width="1.600"><path d="m1 7 5.500-5.500L12 7" /></svg>
      <svg width="18" height="14" viewBox="0 0 18 14" fill="none" stroke="#333" stroke-width="1.300"><rect x=".7" y=".700" width="16.600" height="12.600" rx="2" /><path d="M3.500 4h11M3.500 7h11" stroke-dasharray="1.500 1.500" stroke-width="1.600" /><path d="M5 10.300h8" /></svg>
      <svg width="19" height="20" viewBox="0 0 19 20" fill="none" stroke="#333" stroke-width="1.500"><path d="M13 2H3C2 2 1 3 1 4v9c0 1 1 2 2 2h10M6 15v3M10 15v3M3.500 18.500h9" /><rect x="14" y=".800" width="3.600" height="6.500" rx="1.500" /><path d="M16 7v9c0 2-1 2.500-3 2.500" /></svg>
    </div>
  </div>
</main>

<style>
  :global(body) { margin: 0; background: #fff; }

  main {
    display: flex;
    flex-direction: column;
    height: 100vh;
    overflow: hidden;
    font-family: 'Open Sans', sans-serif;
    font-size: 13px;
    color: #444;
  }

  .defs { position: absolute; }

  button {
    display: flex;
    align-items: center;
    justify-content: center;
    margin: 0;
    padding: 0;
    border: none;
    background: none;
    font: inherit;
    color: inherit;
    white-space: nowrap;
  }

  svg { flex: none; display: block; }
  .caret { fill: #666; }
  .caret.light { fill: #bbb; }

  h1 {
    margin: 0;
    padding: 29px 0 12px 94px;
    font-family: Lato, sans-serif;
    font-size: 46px;
    line-height: 60px;
    color: #000;
  }

  .titlebar {
    display: flex;
    align-items: center;
    height: 36px;
    padding: 6px 14px 0 11px;
    box-sizing: border-box;
  }

  .quick, .help { flex: 1; }
  .quick { display: flex; align-items: center; }
  .quick button { gap: 6px; }
  .save { margin: 0 15px 0 14px; }
  .undo { margin-right: 15px; }
  .redo { margin-right: 13px; }
  .doc { padding-left: 122px; }
  .help { justify-content: flex-end; font-size: 16px; font-weight: 700; color: #666; }

  .tabs { display: flex; height: 28px; border-bottom: 1px solid #d4d4d4; }
  .tabs button { padding: 0 16px; }
  .tabs .file { width: 65px; margin-right: 5px; background: #217346; color: #fff; }
  .tabs .home {
    padding: 0 13px;
    margin-bottom: -1px;
    border: 1px solid #d4d4d4;
    border-bottom: none;
    background: #fff;
    color: #217346;
  }

  .ribbon { display: flex; height: 102px; border-bottom: 1px solid #d4d4d4; }

  .group {
    display: flex;
    flex: none;
    flex-direction: column;
    margin: 3px 0 4px;
    box-sizing: border-box;
    border-right: 1px solid #dcdcdc;
  }

  .body { display: flex; flex: 1; min-height: 0; }
  .group footer {
    position: relative;
    height: 10px;
    line-height: 10px;
    font-size: 12px;
    text-align: center;
    color: #666;
  }
  .clipboard footer, .font footer, .alignment footer, .number footer { padding-right: 18px; }

  .launcher { position: absolute; right: 6px; top: 1px; }
  .clipboard { width: 175px; }
  .font { width: 230px; }
  .alignment { width: 292px; }
  .number { width: 155px; }
  .styles { width: 763px; }
  .cells { width: 151px; }
  .editing { width: 207px; }

  .big { flex-direction: column; justify-content: flex-start; padding-top: 4px; line-height: 18px; }
  .big span { margin-top: 3px; }
  .big > .caret { margin-top: 7px; }
  .big span .caret { display: inline-block; vertical-align: middle; }
  .faded { color: #aaa; }

  .three { display: flex; flex-direction: column; }
  .three button { justify-content: flex-start; gap: 4px; height: 25px; }
  .gap { width: 4px; }

  .clipboard .faded { width: 34px; margin: 0 8px 0 11px; }

  .two { flex-direction: column; gap: 8px; padding-top: 9px; }
  .row { display: flex; align-items: center; height: 25px; }
  .tool { width: 25px; height: 25px; }
  .drop { display: flex; width: 13px; justify-content: center; }
  .sep { width: 1px; height: 25px; margin: 0 5px; background: #dcdcdc; }
  .wide { gap: 4px; }

  .combo { position: relative; display: flex; height: 25px; box-sizing: border-box; border: 1px solid #ababab; }
  .combo select {
    width: 100%;
    padding: 0 2px;
    appearance: none;
    border: none;
    background: #fff;
    font: inherit;
    color: #222;
  }
  .combo .caret { position: absolute; right: 5px; top: 10px; pointer-events: none; }

  .font .row { padding-left: 5px; }
  .name { width: 123px; }
  .size { width: 48px; margin-left: -1px; }
  .grow { align-items: flex-start; font-size: 16px; line-height: 24px; margin-left: 2px; color: #666; }
  .shrink { align-items: flex-start; font-size: 14px; line-height: 26px; color: #666; }
  .grow svg, .shrink svg { margin-top: 4px; }
  .bold { font-weight: 700; margin-left: -2px; font-size: 14px; }
  .italic { font-style: italic; font-family: 'Liberation Serif', serif; font-size: 16px; font-weight: 700; }
  .under { text-decoration: underline; font-weight: 700; font-size: 14px; }
  .sep.last { margin: 0 4px 0 3px; }
  .fontcolor { width: 18px; height: 19px; margin: 0 1px; border-bottom: 5px solid #f00; box-sizing: border-box; font-size: 16px; font-weight: 600; }

  .alignment .row { padding-left: 3px; }
  .alignment .sep { margin: 0 3px; }
  .alignment .sep.far { margin: 0 8px 0 16px; }
  .alignment .sep.near { margin: 0 8px 0 4px; }
  .on { background: #9fd5b7; }

  .number .row { padding-left: 4px; }
  .format { width: 145px; }
  .pct { font-size: 18px; margin-left: 4px; }
  .comma { margin-left: -2px; }
  .dec { flex-direction: column; font-size: 10px; line-height: 11px; }
  .dec span { display: flex; align-items: center; }

  .cond { margin-left: 6px; }
  .fmt { margin-left: 2px; }
  .gallery {
    display: flex;
    height: 67px;
    margin: 2px 0 0 2px;
    box-sizing: border-box;
    border: 1px solid #ababab;
  }
  .swatches { display: grid; grid-template-columns: repeat(5, 111px); gap: 6px; padding: 5px 5px 4px 4px; color: #000; }
  .swatch { justify-content: flex-start; padding-left: 5px; height: 25px; box-sizing: border-box; font-size: 14px; }
  .normal { outline: 3px solid #9fd5b7; }
  .bad { background: #ffc7ce; color: #9c0006; }
  .good { background: #c6efce; color: #006100; }
  .neutral { background: #ffeb9c; color: #9c6500; }
  .calculation { background: #f2f2f2; border: 1px solid #7f7f7f; padding-left: 4px; color: #fa7d00; font-weight: 700; }
  .check { background: #a5a5a5; border: 3px double #3f3f3f; outline: 1px solid #777; padding-left: 2px; color: #fff; font-weight: 700; }
  .explanatory { font-style: italic; color: #7f7f7f; }
  .input { background: #ffcc99; border: 1px solid #7f7f7f; padding-left: 4px; color: #3f3f76; }
  .scroller { display: flex; flex-direction: column; width: 16px; border-left: 1px solid #ababab; }
  .scroller button { flex: 1; }
  .scroller button + button { border-top: 1px solid #ababab; }

  .cells .body { padding-left: 7px; gap: 6px; }
  .cells .big { width: 41px; }
  .editing .body { padding-left: 7px; }
  .sort { margin-left: 4px; }
  .find { margin-left: 5px; }

  .formulabar { display: flex; align-items: center; height: 28px; padding: 12px 0 10px 6px; }
  .cellname { width: 112px; height: 28px; border-color: #d0d0d0; }
  .cellname select { padding-left: 6px; color: #444; }
  .cellname .caret { top: 11px; }
  .grip { width: 33px; text-align: center; font-size: 16px; color: #888; }
  .fx { display: flex; width: 123px; height: 28px; box-sizing: border-box; border: 1px solid #d0d0d0; }
  .fx button { flex: 1; }
  .fn { font-family: 'Liberation Serif', serif; font-style: italic; font-size: 17px; }
  .formulabar input { flex: 1; height: 28px; margin-left: 3px; box-sizing: border-box; border: 1px solid #d0d0d0; border-right: none; }

  .sheet { flex: 1; min-height: 0; overflow: hidden; border-bottom: 1px solid #ababab; }
  table { width: 100%; table-layout: fixed; border-collapse: separate; border-spacing: 0; }
  .rowhead { width: 29px; }
  tbody tr { height: 22px; }
  tbody tr:nth-child(6n + 1) { height: 23px; }

  th, td {
    padding: 0 2px;
    box-sizing: border-box;
    border-right: 1px solid #d4d4d4;
    border-bottom: 1px solid #d4d4d4;
    overflow: hidden;
    line-height: 20px;
    white-space: pre;
  }
  th { padding: 0; font-weight: 400; font-size: 14px; color: #666; }
  thead th { height: 22px; border-bottom-color: #ababab; }
  thead .active { background: #e1e1e1; color: #217346; font-weight: 700; box-shadow: inset 0 -2px #217346; }
  tbody th { border-right-color: #ababab; padding-right: 6px; text-align: right; }
  tbody th.active { background: #e1e1e1; color: #217346; font-weight: 700; }
  .corner svg { margin-left: 11px; }

  td {
    padding-left: 3px;
    font-family: Lato, sans-serif;
    font-size: 14px;
    text-align: left;
    color: #111;
  }
  .num { text-align: right; }
  .selected { position: relative; overflow: visible; }
  .selected::before { content: ''; position: absolute; inset: -2px -1px -1px -2px; border: 2px solid #217346; }
  .selected::after { content: ''; position: absolute; right: -3px; bottom: -3px; width: 5px; height: 5px; border: 1px solid #fff; background: #217346; }
  .flag { background: linear-gradient(135deg, #107c10 5px, transparent 5px); }

  .sheettabs { display: flex; align-items: center; height: 30px; background: #f3f3f3; }
  .arrow { width: 32px; }
  .arrow:first-child { margin-left: 16px; }
  .tab { height: 28px; padding: 0 16px 0 15px; align-self: flex-start; border-left: 1px solid #ababab; color: #555; }
  .arrow + .tab { margin-left: 31px; }
  .tab.current { padding: 0 13px; box-sizing: border-box; border-right: 1px solid #ababab; border-bottom: 2px solid #217346; background: #fff; color: #217346; font-size: 14px; font-weight: 700; }
  .add { margin-left: 36px; }
  .sheettabs .grip { margin-left: auto; }
  .hscroll { width: 705px; height: 18px; box-sizing: border-box; border: 1px solid #ababab; border-right: none; background: #fff; }
  .hscroll button { width: 16px; height: 16px; border-right: 1px solid #ababab; }

  .status { display: flex; align-items: center; height: 24px; padding-left: 8px; border-top: 1px solid #bcd5c7; background: #217346; font-size: 12px; color: #fff; }
  .status > svg { margin-left: 22px; }
  .views { display: flex; margin-left: auto; }
  .views button { width: 42px; height: 24px; }
  .views .shown { background: #0a6332; }
  .minus { width: 7px; height: 3px; margin: 0 4px 0 7px; background: #fff; }
  .track { width: 54px; height: 1px; background: #dfe9e3; }

  .taskbar {
    display: flex;
    flex: none;
    align-items: center;
    height: 52px;
    margin-bottom: 108px;
    border-top: 1px solid #c4ccd0;
    box-sizing: border-box;
    background: linear-gradient(90deg, #dbe4ea 20%, #f1f1f1 28%, #f1f1f1 42%, #e9e8f8 48%, #ebebf8 59%, #f1f1f1 64%, #f1f1f1 78%, #dbe4ea 86%);
  }
  .weather { display: flex; width: 370px; padding-left: 21px; gap: 4px; line-height: 18px; }
  .weather div { display: flex; flex-direction: column; }
  .weather strong { font-weight: 400; color: #222; }
  .weather span { color: #666; }
  .start { margin-right: 15px; }
  .search { display: flex; align-items: center; width: 241px; height: 34px; padding: 0 4px 0 11px; box-sizing: border-box; border: 1px solid #e2e5e7; border-radius: 17px; background: #fbfcfd; }
  .search input { flex: 1; min-width: 0; margin-left: 10px; padding: 0; border: none; background: none; font: inherit; font-size: 14px; }
  .search input::placeholder { color: #666; }
  .apps { display: flex; width: 1074px; height: 45px; margin-left: 2px; }
  .apps button { position: relative; flex: 1 1 48px; }
  .apps .focused { border: 0 solid transparent; border-width: 0 3px; border-radius: 7px; background: #f4f7f9 padding-box; }
  .running::after, .focused::after { content: ''; position: absolute; bottom: 1px; left: 50%; width: 6px; height: 3px; margin-left: -3px; border-radius: 2px; background: #888; }
  .focused::after { width: 18px; margin-left: -9px; background: #e84a5a; }
  .tray { display: flex; align-items: center; gap: 18px; margin-left: auto; padding-right: 8px; }
</style>
